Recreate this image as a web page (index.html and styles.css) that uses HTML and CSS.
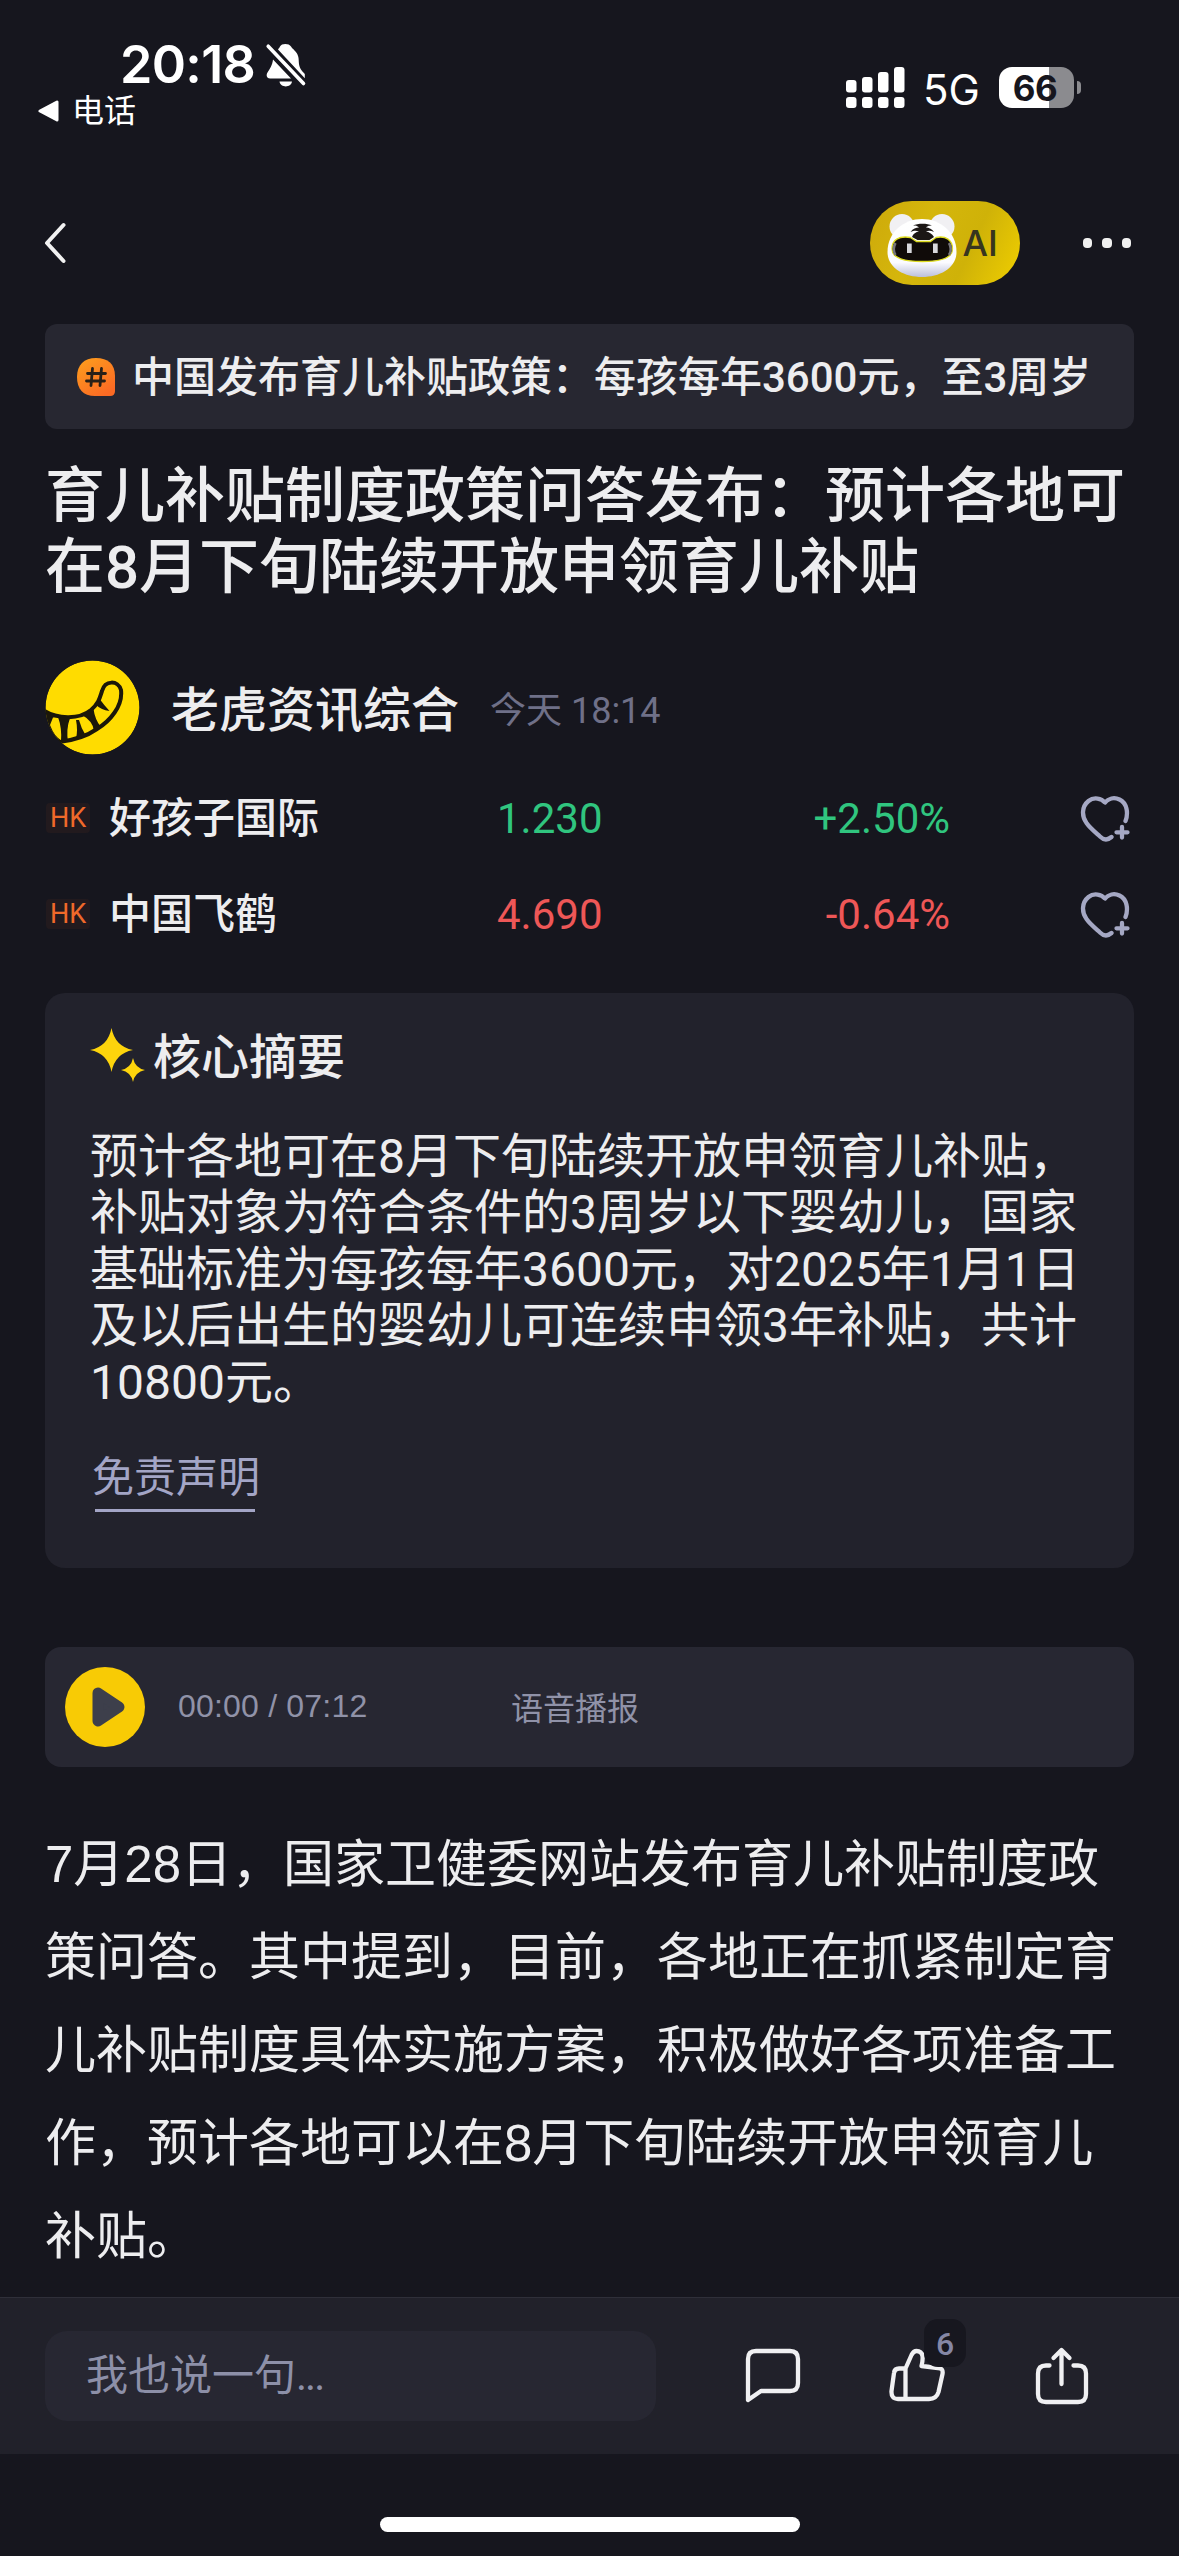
FILE: index.html
```html
<!DOCTYPE html>
<html lang="zh-CN">
<head>
<meta charset="utf-8">
<title>育儿补贴制度政策问答发布</title>
<link rel="stylesheet" href="styles.css">
</head>
<body>
<div class="screen">
  <header class="status">
    <div class="status-left">
      <div class="clock-row">
        <span class="clock">20:18</span>
        <svg class="bell" width="42" height="46" viewBox="0 0 42 46" fill="#fff">
          <path d="M8 17.500C7.500 23 4.500 27.500 2.500 30.500C.8 33.300 1.800 36.500 5 36.500H26Z"/>
          <path d="M13 7.500C14 6 14.500 5.800 15 4.500C16.500 1.200 24 1.200 26 4.500C26.800 6.300 28 6.500 29.500 8.500C33 12 33.800 15 33.800 20C34 26 37 29 39.800 32V36.200Z"/>
          <path d="M14.500 39.500H27C26 46 15.500 46 14.500 39.500Z"/>
          <path d="M3.200 4.200L38.500 41.500" stroke="#fff" stroke-width="3.600" stroke-linecap="round"/>
        </svg>
      </div>
      <div class="return-row">
        <svg width="21" height="22" viewBox="0 0 21 22"><path d="M2 11L19 2V20Z" fill="#fff" stroke="#fff" stroke-width="3" stroke-linejoin="round"/></svg>
        <span class="return">电话</span>
      </div>
    </div>
    <div class="status-right">
      <svg width="60" height="42" viewBox="0 0 60 42" fill="#fff">
        <rect x="0" y="13" width="10.500" height="12.500" rx="3"/><rect x="16" y="10" width="10.500" height="15.500" rx="3"/><rect x="32" y="5" width="10.500" height="20.500" rx="3"/><rect x="48" y="0" width="10.500" height="25.500" rx="3"/>
        <rect x="0" y="30" width="10.500" height="11" rx="3"/><rect x="16" y="30" width="10.500" height="11" rx="3"/><rect x="32" y="30" width="10.500" height="11" rx="3"/><rect x="48" y="30" width="10.500" height="11" rx="3"/>
      </svg>
      <span class="network">5G</span>
      <div class="battery">66</div>
      <div class="battery-tip"></div>
    </div>
  </header>

  <nav class="nav">
    <svg width="24" height="42" viewBox="0 0 24 42" fill="none" stroke="#f2f2f2" stroke-width="4" stroke-linecap="round" stroke-linejoin="round"><path d="M19.500 3L3 21L19.500 39"/></svg>
    <div class="nav-right">
      <div class="ai">
        <svg width="72" height="66" viewBox="0 0 72 66">
          <defs><linearGradient id="fur" x1="0" y1="0" x2="0" y2="1"><stop offset="0" stop-color="#fff"/><stop offset=".75" stop-color="#fbfbff"/><stop offset="1" stop-color="#bcc0dc"/></linearGradient></defs>
          <circle cx="16" cy="14.500" r="12.500" fill="#f1f0f3"/><circle cx="56" cy="14.500" r="12.500" fill="#f1f0f3"/>
          <path d="M36 7C54 7 70.500 20 70.500 40C70.500 56 54 65 36 65S1.500 56 1.500 40C1.500 20 18 7 36 7Z" fill="url(#fur)"/>
          <path d="M30.500 29.500H44.500L50 25.500C60 23.500 66.500 28 66.500 37C66.500 46.500 54 49.500 36.500 49.500S6 46.500 6 37C6 28 12.500 23.500 24.500 25.500Z" fill="#100b09" stroke="#dedc20" stroke-width="1.300"/>
          <path d="M9.500 31Q6 37 9.500 43M63 31Q66.500 37 63 43" fill="none" stroke="#77767c" stroke-width="2.500"/>
          <path d="M27 13.500C32 11 41 11 46 13.500C42 13.500 41 14.500 40 15.500C43 15.500 46 17 48 20C45 18.500 42 18.500 40 19.500C43 20 46 21.500 48 25L43.500 28H31.500L26 25C27 21.500 30 20 33 19.500C30 18.500 28 18.500 24.500 20C27 16.500 30 15.500 33 15.500C32 14.500 31 13.500 27 13.500Z" fill="#1c1715"/>
          <rect x="21" y="31.500" width="4.700" height="9.500" fill="#d8d8dc"/><rect x="47" y="31.500" width="4.700" height="9.500" fill="#d8d8dc"/>
        </svg>
        <span>AI</span>
      </div>
      <div class="more"><i></i><i></i><i></i></div>
    </div>
  </nav>

  <main class="article">
    <div class="topic">
      <svg width="38" height="38" viewBox="0 0 38 38">
        <defs><linearGradient id="flame" x1="0" y1="0" x2=".7" y2="1"><stop offset="0" stop-color="#fda01d"/><stop offset="1" stop-color="#fb6a24"/></linearGradient></defs>
        <path d="M19 0C31 0 38 6 38 18V33Q38 38 33 38H18C6 38 0 31 0 19S7 0 19 0Z" fill="url(#flame)"/>
        <path d="M15.500 10.500L14 27.500M24.500 10.500L23 27.500M10.500 15.500H28.500M9.500 23H27.500" fill="none" stroke="#292018" stroke-width="2.800" stroke-linecap="round"/>
      </svg>
      <span>中国发布育儿补贴政策：每孩每年3600元，至3周岁</span>
    </div>
    <h1 class="title">育儿补贴制度政策问答发布：预计各地可在8月下旬陆续开放申领育儿补贴</h1>
    <div class="author">
      <svg width="95" height="95" viewBox="0 0 95 95">
        <defs><clipPath id="disc"><circle cx="47.500" cy="47.500" r="47"/></clipPath></defs>
        <g clip-path="url(#disc)">
          <circle cx="47.500" cy="47.500" r="47" fill="#ffdc00"/>
          <path d="M-2 50C12 59 34 60 46 50C54 43 55 37 57 31C60 20 73 20 76 30C78 46 65 61 52 69C42 76 31 80 14 82" fill="none" stroke="#1b170a" stroke-width="4" stroke-linecap="round"/>
          <path d="M3 52L12 57Q2 66 17 82L8 90L-4 76V50Z" fill="#1b170a"/>
          <path d="M8 57.500Q12 57 14 59Q14 70 16.500 80Q10 78 5 65Z" fill="#ffdc00"/>
          <path d="M13 57L25 58Q21 69 23 82L16 81Q17 68 13 57ZM31 60H34Q36 68 41 76L31 79Q33 70 31 60ZM37 55L48.500 49Q50 60 56 67L49 71Q48 61 37 55ZM50 44L55 39.500Q59 45 64.500 51Q56 50 50 44Z" fill="#1b170a"/>
        </g>
      </svg>
      <span class="author-name">老虎资讯综合</span>
      <span class="author-time">今天 18:14</span>
    </div>
    <div class="stocks">
      <div class="stock up">
        <span class="market">HK</span><span class="stock-name">好孩子国际</span><span class="price">1.230</span><span class="change">+2.50%</span>
        <svg class="heart" width="50" height="48" viewBox="0 0 50 48"><path d="M45.500 27C48.500 19 47 9 39.500 5.500C34 2.800 28.500 4.500 25 8.500C21.500 4.500 14 2.500 8.500 7C1 13 2 23 6.500 29C10 34 15 38 20 42.500C24 46.500 28 46 31.500 43M42 33V43.500M36.500 38.300H47.500" fill="none" stroke="#a5a8c4" stroke-width="4.300" stroke-linecap="round" stroke-linejoin="round"/></svg>
      </div>
      <div class="stock down">
        <span class="market">HK</span><span class="stock-name">中国飞鹤</span><span class="price">4.690</span><span class="change">-0.64%</span>
        <svg class="heart" width="50" height="48" viewBox="0 0 50 48"><path d="M45.500 27C48.500 19 47 9 39.500 5.500C34 2.800 28.500 4.500 25 8.500C21.500 4.500 14 2.500 8.500 7C1 13 2 23 6.500 29C10 34 15 38 20 42.500C24 46.500 28 46 31.500 43M42 33V43.500M36.500 38.300H47.500" fill="none" stroke="#a5a8c4" stroke-width="4.300" stroke-linecap="round" stroke-linejoin="round"/></svg>
      </div>
    </div>
    <section class="summary">
      <h2 class="summary-head">
        <svg width="56" height="56" viewBox="0 0 56 56" fill="#fdd40c"><path d="M21.500 0Q25 18.500 43 22Q25 25.500 21.500 44Q18 25.500 0 22Q18 18.500 21.500 0ZM43 30Q45 40 55 42Q45 44 43 54Q41 44 31 42Q41 40 43 30Z"/></svg>
        <span>核心摘要</span>
      </h2>
      <p class="summary-text">预计各地可在8月下旬陆续开放申领育儿补贴，补贴对象为符合条件的3周岁以下婴幼儿，国家基础标准为每孩每年3600元，对2025年1月1日及以后出生的婴幼儿可连续申领3年补贴，共计10800元。</p>
      <span class="disclaimer">免责声明</span>
    </section>
    <section class="player">
      <svg width="80" height="80" viewBox="0 0 80 80"><circle cx="40" cy="40" r="40" fill="#f8cb05"/><path d="M33 26L54 40L33 54Z" fill="#3d3f4b" stroke="#3d3f4b" stroke-width="11" stroke-linejoin="round"/></svg>
      <span class="player-time">00:00 / 07:12</span>
      <span class="player-label">语音播报</span>
    </section>
    <p class="body-text">7月28日，国家卫健委网站发布育儿补贴制度政策问答。其中提到，目前，各地正在抓紧制定育儿补贴制度具体实施方案，积极做好各项准备工作，预计各地可以在8月下旬陆续开放申领育儿补贴。</p>
  </main>

  <footer class="toolbar">
    <div class="reply">我也说一句<span class="dots">...</span></div>
    <svg class="comment" width="56" height="56" viewBox="0 0 56 56" fill="none" stroke="#f0f0f2" stroke-width="4.300" stroke-linecap="round" stroke-linejoin="round"><path d="M3 52V11Q3 3 11 3H45Q53 3 53 11V35Q53 43 45 43H16Z"/></svg>
    <div class="like">
      <svg width="56" height="56" viewBox="0 0 56 56" fill="none" stroke="#f0f0f2" stroke-width="4.300" stroke-linecap="round" stroke-linejoin="round"><path d="M16.500 20.500H10Q5.500 20.500 5 25L2.500 43Q2 51 9 51H40Q47.500 51 49.500 44L53.500 26Q54.500 20 49 20L32.500 18Q34 12 33.500 8Q32.500 3 27.500 3Q24.500 3 22.500 7L16.500 20.500V51"/></svg>
      <span class="like-count">6</span>
    </div>
    <svg class="share" width="56" height="60" viewBox="0 0 56 60" fill="none" stroke="#f0f0f2" stroke-width="4.300" stroke-linecap="round" stroke-linejoin="round"><path d="M15.500 19.500H12Q4 19.500 4 27.500V48Q4 56 12 56H44Q52 56 52 48V27.500Q52 19.500 44 19.500H39.500M27.500 38V5M19.500 12L27.500 4L35.500 12"/></svg>
  </footer>
  <div class="home"><div class="home-bar"></div></div>
</div>
</body>
</html>
```
FILE: styles.css
```css
* { box-sizing: border-box; margin: 0; padding: 0; }
body {
  background: #16161e;
  color: #ededef;
  font-family: Roboto, "Noto Sans CJK SC", sans-serif;
}
svg { display: block; flex: none; }
.screen {
  width: 1179px;
  height: 2556px;
  overflow: hidden;
  display: flex;
  flex-direction: column;
}

.status {
  height: 186px;
  flex: none;
  display: flex;
  justify-content: space-between;
  color: #fff;
}
.status-left { padding: 40px 0 0 38px; }
.clock-row { display: flex; align-items: flex-start; height: 51px; padding-left: 82px; }
.clock {
  width: 145px;
  font: 600 52px/50px Inter, sans-serif;
  letter-spacing: -0.7px;
}
.bell { margin-top: 2px; }
.return-row { display: flex; align-items: center; height: 40px; gap: 13px; }
.return { font-size: 32px; line-height: 40px; }
.status-right { display: flex; align-items: flex-start; padding: 67px 98px 0 0; }
.network { width: 76px; margin-left: 17px; font: 400 42px/46px Inter, sans-serif; }
.battery {
  width: 75px;
  height: 41px;
  padding-right: 3px;
  border-radius: 13px;
  background: linear-gradient(90deg, #fff 67%, #8b8b8f 67%);
  color: #16161e;
  font: 700 35px/42px Inter, sans-serif;
  letter-spacing: -0.5px;
  text-align: center;
}
.battery-tip { width: 4px; height: 13px; margin: 14px 0 0 3px; border-radius: 0 5px 5px 0; background: #8b8b8f; }

.nav {
  height: 138px;
  flex: none;
  display: flex;
  align-items: flex-start;
  justify-content: space-between;
  padding: 15px 48px 0 44px;
}
.nav > svg { margin-top: 21px; }
.nav-right { display: flex; align-items: center; gap: 63px; }
.ai {
  width: 150px;
  height: 84px;
  padding-left: 16px;
  border-radius: 42px;
  display: flex;
  align-items: center;
  gap: 5px;
  background: linear-gradient(115deg, #cda90a 0%, #d5b60c 35%, #cfb208 65%, #f0cf00 100%);
  color: #37351f;
  font: 500 36px/40px Inter, sans-serif;
}
.ai svg { margin-top: 4px; }
.more { display: flex; gap: 10px; }
.more i { width: 9.5px; height: 9.5px; border-radius: 4px; background: #f0f0f0; }

.article { flex: none; height: 1973px; padding: 0 45px; }
.topic {
  height: 105px;
  padding: 0 0 0 32px;
  border-radius: 12px;
  background: #272731;
  display: flex;
  align-items: center;
  gap: 17px;
  font-size: 42px;
  font-weight: 500;
  white-space: nowrap;
}
.topic span { padding-bottom: 6px; }
.title {
  width: 1090px;
  margin-top: 32px;
  font-size: 60px;
  font-weight: 500;
  line-height: 71px;
}
.author { display: flex; align-items: center; height: 95px; margin-top: 57px; }
.author-name { width: 316px; padding: 6px 0 0 31px; font-size: 48px; font-weight: 500; white-space: nowrap; }
.author-time { margin-left: 34px; padding-top: 6px; font-size: 36px; color: #6f7088; }
.author-name, .author-time { line-height: 60px; }
.stocks { margin-top: 15px; }
.stock {
  height: 96px;
  display: grid;
  grid-template-columns: 64px 388px 200px 253px 1fr;
  align-items: center;
  font-size: 42px;
}
.market {
  width: 44px;
  height: 30px;
  margin-left: 1px;
  border-radius: 4px;
  background: #221a1e;
  color: #f0692a;
  font-size: 27px;
  line-height: 31px;
  text-align: center;
}
.stock-name { font-weight: 500; padding-bottom: 7px; }
.change { text-align: right; }
.up .price, .up .change { color: #30c57f; }
.down .price, .down .change { color: #ee5757; }
.heart { justify-self: end; margin-right: 4px; }
.summary {
  height: 575px;
  margin-top: 31px;
  padding: 34px 46px 0 45px;
  border-radius: 20px;
  background: #22222c;
}
.summary-head { display: flex; align-items: center; gap: 7px; height: 58px; font-size: 48px; font-weight: 500; }
.summary-head span { padding-bottom: 7px; }
.summary-text { width: 992px; margin-top: 44px; font-size: 48px; line-height: 56.4px; }
.disclaimer {
  display: inline-block;
  width: 160px;
  margin: 36px 0 0 5px;
  height: 65px;
  font-size: 42px;
  line-height: 62px;
  text-indent: -3px;
  white-space: nowrap;
  color: #a3a5c6;
  border-bottom: 3px solid #a3a5c6;
}
.player {
  height: 120px;
  margin-top: 79px;
  padding-left: 20px;
  border-radius: 16px;
  background: #272732;
  display: flex;
  align-items: center;
  font-family: "Liberation Sans", "Noto Sans CJK SC", sans-serif;
  font-size: 32px;
  color: #9092a8;
}
.player-time { width: 333px; margin-left: 33px; padding-bottom: 2px; letter-spacing: 0.2px; }
.player-label { padding-bottom: 3px; }
.body-text {
  margin-top: 51px;
  font-family: "Liberation Sans", "Noto Sans CJK SC", sans-serif;
  font-size: 51px;
  line-height: 93px;
}

.toolbar {
  height: 157px;
  flex: none;
  padding: 0 89px 0 45px;
  border-top: 1px solid #2f2f39;
  background: #21212a;
  display: flex;
  align-items: center;
}
.reply {
  width: 612px;
  height: 90px;
  padding-left: 41px;
  border-radius: 22px;
  background: #272732;
  color: #8d90a8;
  font-size: 42px;
  line-height: 90px;
}
.dots { letter-spacing: -2px; }
.comment { margin-left: 89px; }
.like { position: relative; margin-left: 88px; }
.like-count {
  position: absolute;
  left: 35px;
  top: -29px;
  width: 42px;
  height: 48px;
  border-radius: 14px;
  background: #17171f;
  color: #8587a5;
  font: 500 32px/50px Roboto, sans-serif;
  text-align: center;
}
.share { margin-left: 89px; }
.home { flex: 1; display: flex; justify-content: center; padding-top: 63px; }
.home-bar { width: 420px; height: 15px; border-radius: 8px; background: #fff; }
```
